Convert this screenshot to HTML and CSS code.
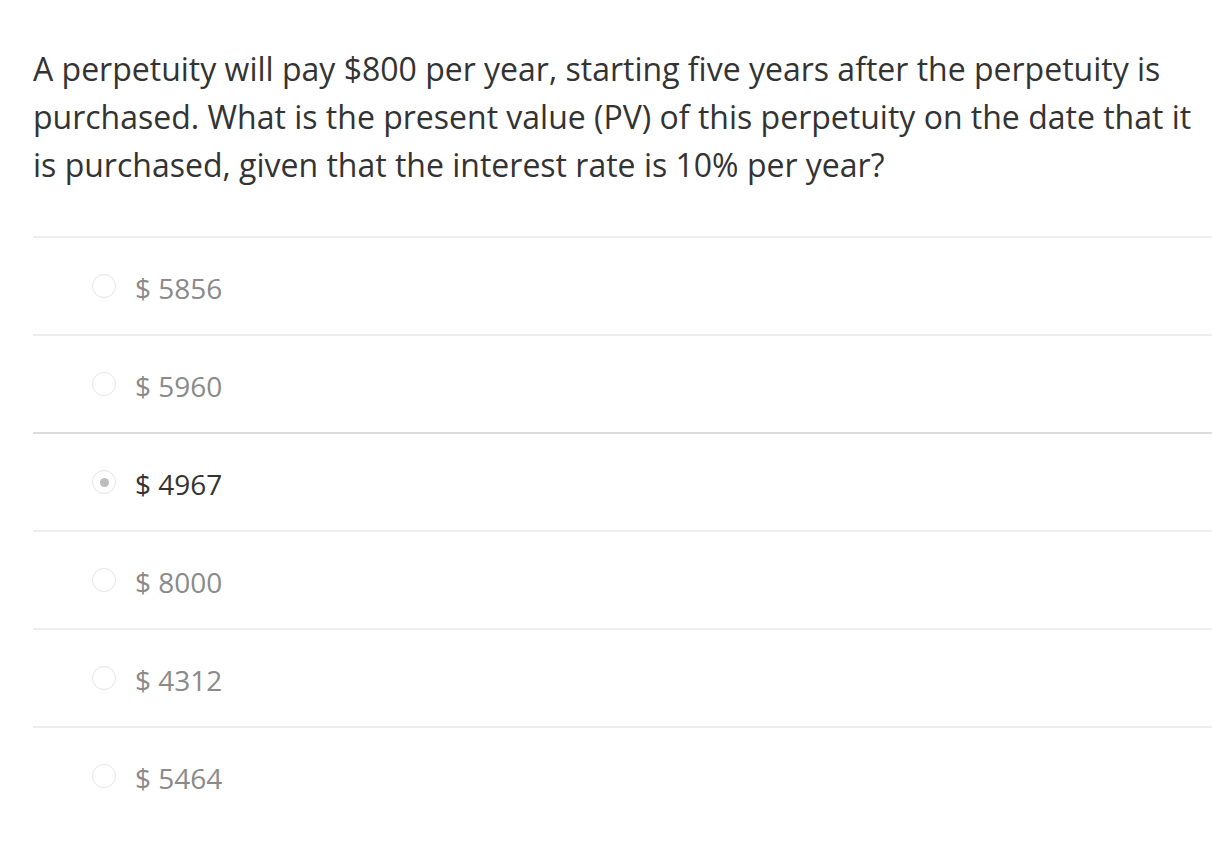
FILE: index.html
```html
<!DOCTYPE html>
<html>
<head>
<meta charset="utf-8">
<link rel="stylesheet" href="styles.css">
</head>
<body>
<div class="quiz">
  <p class="question">A perpetuity will pay $800 per year, starting five years after the perpetuity is purchased. What is the present value (PV) of this perpetuity on the date that it is purchased, given that the interest rate is 10% per year?</p>
  <ul class="options">
    <li class="option"><span class="radio"></span><span class="label">$ 5856</span></li>
    <li class="option"><span class="radio"></span><span class="label">$ 5960</span></li>
    <li class="option selected"><span class="radio"></span><span class="label">$ 4967</span></li>
    <li class="option"><span class="radio"></span><span class="label">$ 8000</span></li>
    <li class="option"><span class="radio"></span><span class="label">$ 4312</span></li>
    <li class="option"><span class="radio"></span><span class="label">$ 5464</span></li>
  </ul>
</div>
</body>
</html>
```
FILE: styles.css
```css
html, body {
  margin: 0;
  padding: 0;
  background: #fff;
}
body {
  font-family: "Open Sans", "Liberation Sans", sans-serif;
  color: #333;
}
.quiz {
  padding: 45px 0 0 33px;
}
.question {
  margin: 0;
  font-size: 32px;
  line-height: 48px;
  color: #333;
}
.options {
  list-style: none;
  margin: 47px 0 0 0;
  padding: 0;
}
.option {
  display: flex;
  align-items: center;
  height: 96px;
  border-top: 2px solid #eeeeee;
  padding-left: 59px;
}
.option.selected {
  border-top-color: #dddddd;
}
.radio {
  width: 22px;
  height: 22px;
  border: 1px solid #e6e6e6;
  border-radius: 50%;
  box-shadow: 0 0 1px rgba(0,0,0,0.05);
  display: flex;
  align-items: center;
  justify-content: center;
  flex: none;
}
.selected .radio::after {
  content: "";
  width: 9px;
  height: 9px;
  border-radius: 50%;
  background: #bdbdbd;
}
.label {
  margin-left: 19px;
  padding-top: 4px;
  font-size: 28px;
  color: #8a8a8a;
  line-height: 36px;
}
.selected .label {
  color: #333;
}
```
